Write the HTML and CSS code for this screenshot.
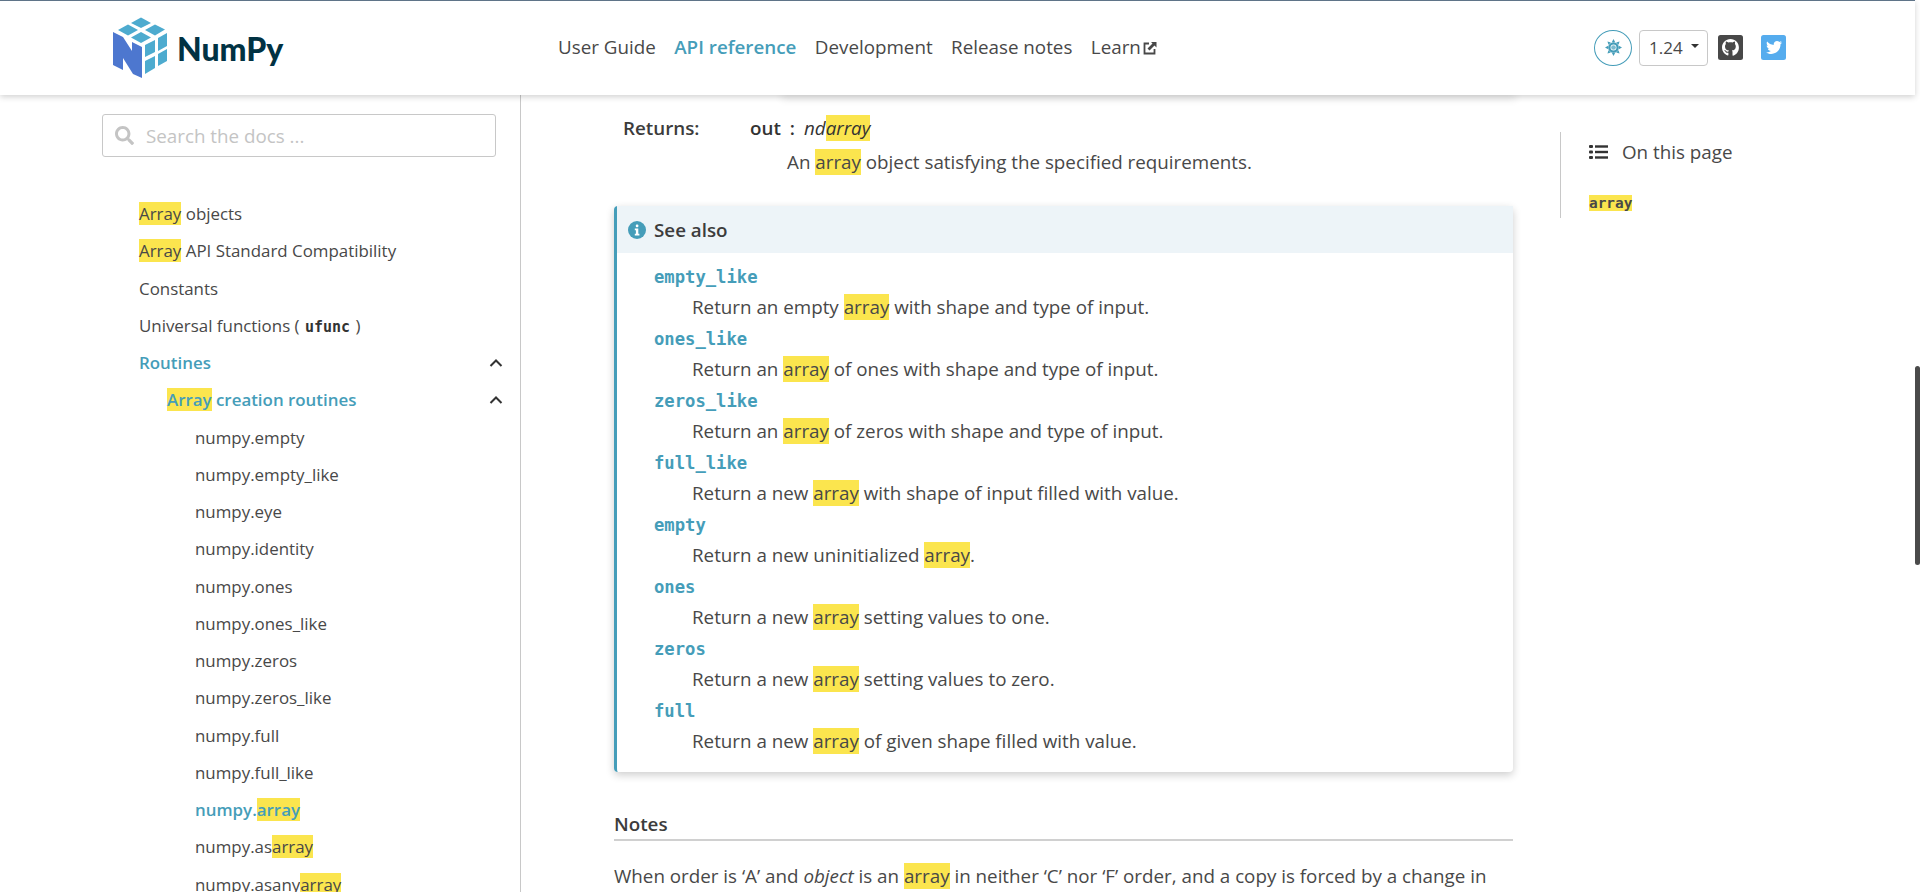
FILE: index.html
```html
<!DOCTYPE html>
<html lang="en">
<head>
    <meta charset="UTF-8">
    <title>numpy.array - NumPy v1.24 Manual</title>
    <link rel="stylesheet" href="styles.css">
</head>
<body>
    <!-- Navbar -->
    <header class="navbar">
        <a class="brand">
            <svg class="logo" viewBox="0 0 70 70">
                <g fill="#4dabcf">
                    <polygon points="33,4.500 43,10 33,15 23,10"/>
                    <polygon points="20,11.500 30,17 20,22.500 10,17"/>
                    <polygon points="47,11.500 57,16.500 47,22.500 37,17"/>
                    <polygon points="33,19 43,24.500 33,30 23,24.500"/>
                    <polygon points="37,32 47,27 47,39 37,44"/>
                    <polygon points="50,25 59,20 59,33 50,38"/>
                    <polygon points="37,48 47,43 47,55 37,61"/>
                    <polygon points="50,41 59,36 59,48 50,53"/>
                </g>
                <polygon fill="#4d77cf" points="5,19 15,24 24,38 24,29 34,34 34,65 25,61 15,45 15,57 5,52"/>
            </svg>
            <span class="brand-name">NumPy</span>
        </a>
        <nav class="main-nav">
            <a>User Guide</a>
            <a class="active">API reference</a>
            <a>Development</a>
            <a>Release notes</a>
            <a>Learn<svg class="ext-icon" viewBox="0 0 16 16"><path d="M7 3.500H2.500v10h10V9" fill="none" stroke="#484848" stroke-width="1.800"/><path d="M9 2h5.500v5.500l-2-2L7.500 10.500 5.500 8.500l5-5z" fill="#484848"/></svg></a>
        </nav>
        <div class="nav-tools">
            <button class="theme-btn">
                <svg viewBox="0 0 16 16" width="17" height="17"><g fill="#459db9"><path fill-rule="evenodd" d="M8 3a5 5 0 1 0 0 10A5 5 0 0 0 8 3zm0 2.200a2.800 2.800 0 1 1 0 5.600 2.800 2.800 0 0 1 0-5.600z"/><path d="M8 0l1.600 3H6.400zM8 16l-1.600-3h3.200zM0 8l3-1.600v3.200zM16 8l-3 1.600V6.400zM2.300 2.300l3.200 1-2.200 2.200zM13.700 13.700l-3.200-1 2.200-2.200zM13.700 2.300l-1 3.200-2.200-2.200zM2.300 13.700l1-3.200 2.200 2.200z"/><circle cx="8" cy="8" r="2.200" opacity="0.700"/></g></svg>
            </button>
            <button class="version-btn">1.24<span class="caret"></span></button>
            <a class="social">
                <svg viewBox="0 0 26 26" width="26" height="26"><rect width="25" height="25" rx="2.500" fill="#484848"/><path d="M12.500 4C7.800 4 4 7.800 4 12.500c0 3.700 2.400 6.900 5.800 8 .4.100.600-.2.600-.4v-2.400c-2.400.5-2.900-1-2.900-1-.4-1-1-1.300-1-1.300-.8-.5.100-.5.100-.5.900.1 1.300.9 1.300.9.800 1.300 2 .9 2.500.7.100-.6.300-.9.500-1.100-1.900-.2-3.900-1-3.900-4.200 0-.9.300-1.700.9-2.300-.1-.2-.4-1.100.1-2.300 0 0 .7-.2 2.300.9.700-.2 1.400-.3 2.100-.3s1.400.1 2.100.3c1.600-1.100 2.300-.9 2.300-.9.500 1.200.2 2.100.1 2.300.5.600.9 1.400.9 2.300 0 3.200-2 4-3.900 4.200.3.300.6.800.6 1.600v3.300c0 .2.200.5.600.4 3.400-1.100 5.800-4.300 5.800-8C21 7.800 17.200 4 12.500 4z" fill="#fff"/></svg>
            </a>
            <a class="social">
                <svg viewBox="0 0 26 26" width="26" height="26"><rect width="25" height="25" rx="2.500" fill="#55acee"/><path d="M21 7.400c-.6.300-1.200.4-1.900.5.700-.4 1.200-1 1.400-1.800-.6.400-1.300.7-2.100.8-.6-.6-1.500-1-2.400-1-1.800 0-3.300 1.500-3.300 3.300 0 .3 0 .5.100.7-2.700-.1-5.100-1.400-6.700-3.400-.3.500-.4 1-.4 1.700 0 1.100.6 2.200 1.500 2.700-.5 0-1-.2-1.500-.4 0 1.600 1.100 2.900 2.600 3.200-.5.200-1 .2-1.500.1.400 1.300 1.600 2.200 3.100 2.300-1.400 1-3 1.500-4.900 1.300 1.500.9 3.200 1.500 5.100 1.500 6.100 0 9.400-5 9.400-9.400v-.4c.6-.5 1.200-1.100 1.600-1.700z" fill="#fff"/></svg>
            </a>
        </div>
    </header>

    <!-- Main content -->
    <div class="layout">
        <aside class="sidebar">
            <div class="search-box">
                <svg viewBox="0 0 512 512" width="19" height="19"><path fill="#c4c4c4" d="M505 442.700L405.300 343c-4.500-4.500-10.600-7-17-7H372c27.600-35.300 44-79.700 44-128C416 93.100 322.900 0 208 0S0 93.100 0 208s93.100 208 208 208c48.300 0 92.700-16.400 128-44v16.300c0 6.400 2.500 12.500 7 17l99.700 99.700c9.400 9.400 24.600 9.400 33.900 0l28.300-28.300c9.400-9.400 9.400-24.600.1-34zM208 336c-70.700 0-128-57.200-128-128 0-70.700 57.200-128 128-128 70.700 0 128 57.200 128 128 0 70.700-57.200 128-128 128z"/></svg>
                <span class="search-text">Search the docs ...</span>
            </div>
            <ul class="side-nav">
                <li><a><mark>Array</mark> objects</a></li>
                <li><a><mark>Array</mark> API Standard Compatibility</a></li>
                <li><a>Constants</a></li>
                <li><a>Universal functions ( <code>ufunc</code> )</a></li>
                <li class="current"><a>Routines</a><svg class="chevron" viewBox="0 0 14 10"><path d="M1.500 8L7 2.500 12.500 8" fill="none" stroke="#333" stroke-width="2"/></svg></li>
                <li class="current lvl2"><a><mark>Array</mark> creation routines</a><svg class="chevron" viewBox="0 0 14 10"><path d="M1.500 8L7 2.500 12.500 8" fill="none" stroke="#333" stroke-width="2"/></svg></li>
                <li class="lvl3"><a>numpy.empty</a></li>
                <li class="lvl3"><a>numpy.empty_like</a></li>
                <li class="lvl3"><a>numpy.eye</a></li>
                <li class="lvl3"><a>numpy.identity</a></li>
                <li class="lvl3"><a>numpy.ones</a></li>
                <li class="lvl3"><a>numpy.ones_like</a></li>
                <li class="lvl3"><a>numpy.zeros</a></li>
                <li class="lvl3"><a>numpy.zeros_like</a></li>
                <li class="lvl3"><a>numpy.full</a></li>
                <li class="lvl3"><a>numpy.full_like</a></li>
                <li class="lvl3 current"><a>numpy.<mark>array</mark></a></li>
                <li class="lvl3"><a>numpy.as<mark>array</mark></a></li>
                <li class="lvl3"><a>numpy.asany<mark>array</mark></a></li>
            </ul>
        </aside>

        <main class="content">
            <div class="sig-edge"></div>
            <div class="returns">
                <span class="field-name">Returns:</span>
                <div class="field-body">
                    <div class="ret-type"><strong>out</strong><span class="colon">:</span><em>nd<mark>array</mark></em></div>
                    <p>An <mark>array</mark> object satisfying the specified requirements.</p>
                </div>
            </div>

            <section class="admonition">
                <div class="admonition-title">
                    <svg viewBox="0 0 18 18" width="18" height="18"><circle cx="9" cy="9" r="9" fill="#459db9"/><rect x="7.800" y="3.600" width="2.600" height="2.600" rx="1" fill="#fff"/><path d="M6.800 7.600h3.500v5.200h1.100v1.600H6.800v-1.600h1.100V9.200H6.800z" fill="#fff"/></svg>
                    See also
                </div>
                <dl class="see-list">
                    <dt>empty_like</dt>
                    <dd>Return an empty <mark>array</mark> with shape and type of input.</dd>
                    <dt>ones_like</dt>
                    <dd>Return an <mark>array</mark> of ones with shape and type of input.</dd>
                    <dt>zeros_like</dt>
                    <dd>Return an <mark>array</mark> of zeros with shape and type of input.</dd>
                    <dt>full_like</dt>
                    <dd>Return a new <mark>array</mark> with shape of input filled with value.</dd>
                    <dt>empty</dt>
                    <dd>Return a new uninitialized <mark>array</mark>.</dd>
                    <dt>ones</dt>
                    <dd>Return a new <mark>array</mark> setting values to one.</dd>
                    <dt>zeros</dt>
                    <dd>Return a new <mark>array</mark> setting values to zero.</dd>
                    <dt>full</dt>
                    <dd>Return a new <mark>array</mark> of given shape filled with value.</dd>
                </dl>
            </section>

            <h2 class="rubric">Notes</h2>
            <p class="notes-text">When order is ‘A’ and <em>object</em> is an <mark>array</mark> in neither ‘C’ nor ‘F’ order, and a copy is forced by a change in</p>
        </main>

        <aside class="toc">
            <div class="toc-inner">
                <div class="toc-title">
                    <svg viewBox="0 0 20 16" width="20" height="16"><g fill="#333"><rect x="0" y="1" width="4" height="3" rx="1"/><rect x="0" y="6.500" width="4" height="3" rx="1"/><rect x="0" y="12" width="4" height="3" rx="1"/><rect x="6" y="1.300" width="13" height="2.400"/><rect x="6" y="6.800" width="13" height="2.400"/><rect x="6" y="12.300" width="13" height="2.400"/></g></svg>
                    On this page
                </div>
                <a class="toc-link"><mark>array</mark></a>
            </div>
        </aside>
    </div>

    <div class="scroll-thumb"></div>
</body>
</html>
```

FILE: styles.css
```css
html, body {
    margin: 0;
    padding: 0;
    height: 892px;
    overflow: hidden;
}

body {
    font-family: "Open Sans", sans-serif;
    font-size: 18.800px;
    color: #484848;
    background-color: #fff;
}

mark {
    background-color: #fbe54e;
    color: inherit;
}

code, dt {
    font-family: "DejaVu Sans Mono", monospace;
}

/* Navbar */
.navbar {
    position: relative;
    z-index: 2;
    display: flex;
    align-items: center;
    box-sizing: border-box;
    width: 1915px;
    height: 95px;
    border-top: 1px solid #5f7488;
    background-color: #fff;
    box-shadow: 0 2px 6px rgba(0, 0, 0, 0.18);
}

.brand {
    display: flex;
    align-items: center;
    width: 558px;
    padding-left: 108px;
    box-sizing: border-box;
}

.logo {
    width: 70px;
    height: 70px;
}

.brand-name {
    font-family: Lato, sans-serif;
    font-weight: 900;
    font-size: 32px;
    color: #013243;
    margin-left: -1px;
}

.main-nav {
    display: flex;
    gap: 18.500px;
    width: 1036px;
    margin-top: -2px;
}

.main-nav a {
    display: flex;
    align-items: center;
    white-space: nowrap;
}

.main-nav .active {
    color: #459db9;
    font-weight: 600;
}

.ext-icon {
    width: 16px;
    height: 16px;
    margin-left: 1px;
    margin-top: 2px;
}

.nav-tools {
    display: flex;
    align-items: center;
    margin-top: -1px;
}

.theme-btn {
    display: flex;
    align-items: center;
    justify-content: center;
    width: 38px;
    height: 36px;
    margin-right: 7px;
    padding: 0;
    border: 1px solid #459db9;
    border-radius: 50%;
    background: none;
}

.version-btn {
    display: flex;
    align-items: center;
    width: 69px;
    height: 36px;
    padding: 0 0 0 9px;
    box-sizing: border-box;
    border: 1px solid #c8c8c8;
    border-radius: 4px;
    background: none;
    font-family: inherit;
    font-size: 17px;
    color: #484848;
}

.caret {
    margin-left: 8px;
    margin-bottom: 3px;
    border-top: 4.500px solid #333;
    border-left: 4.500px solid transparent;
    border-right: 4.500px solid transparent;
}

.social {
    display: flex;
    margin-left: 10px;
    width: 33px;
}

/* Three columns under the navbar */
.layout {
    display: flex;
    height: 797px;
    overflow: hidden;
}

.sidebar {
    box-sizing: border-box;
    width: 521px;
    flex-shrink: 0;
    padding: 19px 0 0 102px;
    border-right: 1px solid #c8c8c8;
}

.search-box {
    display: flex;
    align-items: center;
    box-sizing: border-box;
    width: 394px;
    height: 43px;
    padding-left: 12px;
    border: 1px solid #c8c8c8;
    border-radius: 3px;
}

.search-text {
    margin-left: 12px;
    color: #c4c4c4;
}

.side-nav {
    list-style: none;
    margin: 38px 0 0;
    padding: 0 0 0 37px;
    font-size: 16.900px;
}

.side-nav li {
    display: flex;
    align-items: center;
    justify-content: space-between;
    height: 37.250px;
    width: 366px;
}

.side-nav code {
    font-size: 15px;
    font-weight: 700;
    color: #333;
    margin: 0 1px;
}

.side-nav .current {
    color: #459db9;
    font-weight: 600;
}

.side-nav .lvl2 a {
    padding-left: 28px;
}

.side-nav .lvl3 a {
    padding-left: 56px;
}

.chevron {
    width: 14px;
    height: 10px;
    margin-right: 2px;
}

/* Article */
.content {
    box-sizing: border-box;
    width: 993px;
    flex-shrink: 0;
    padding-left: 93px;
    line-height: 34px;
}

.sig-edge {
    height: 0;
    margin-left: 170px;
    box-shadow: 0 1px 8px 2px rgba(0, 0, 0, 0.16);
}

.returns {
    display: flex;
    padding: 16px 0 0 9px;
    width: 890px;
}

.field-name {
    width: 127px;
    color: #3c3c3c;
    font-weight: 600;
}

.field-body p {
    margin: 0;
    padding-left: 37px;
    color: #484848;
}

.ret-type {
    color: #333;
}

.ret-type strong {
    font-weight: 600;
}

.colon {
    margin: 0 9px;
    font-weight: 600;
}

.admonition {
    width: 899px;
    box-sizing: border-box;
    margin-top: 27px;
    border-left: 3px solid #459db9;
    border-radius: 4px;
    box-shadow: 0 3px 8px rgba(0, 0, 0, 0.2);
}

.admonition-title {
    display: flex;
    align-items: center;
    gap: 8px;
    height: 47px;
    padding-left: 11px;
    background-color: #edf4f8;
    color: #3c3c3c;
    font-weight: 600;
}

.see-list {
    margin: 0;
    padding: 8px 0 15px 37px;
}

.see-list dt {
    height: 31px;
    line-height: 33px;
    font-size: 17.200px;
    font-weight: 700;
    color: #459db9;
}

.see-list dd {
    height: 31px;
    line-height: 31px;
    margin: 0 0 0 38px;
}

.rubric {
    width: 899px;
    height: 34px;
    box-sizing: border-box;
    margin: 35px 0 0;
    border-bottom: 2px solid #d0d0d0;
    font-size: 18.800px;
    font-weight: 600;
    line-height: 34px;
    color: #3c3c3c;
}

.notes-text {
    margin: 18px 0 0;
    white-space: nowrap;
}

/* Right hand table of contents */
.toc {
    padding: 37px 0 0 46px;
}

.toc-inner {
    box-sizing: border-box;
    height: 86px;
    padding: 7px 0 0 28px;
    border-left: 1px solid #c8c8c8;
}

.toc-title {
    display: flex;
    align-items: center;
    gap: 13px;
    white-space: nowrap;
}

.toc-link {
    display: block;
    margin-top: 29px;
    font-family: "DejaVu Sans Mono", monospace;
    font-size: 14.400px;
    font-weight: 700;
    line-height: 18px;
}

.scroll-thumb {
    position: absolute;
    top: 366px;
    left: 1915px;
    width: 5px;
    height: 199px;
    border-radius: 3px;
    background-color: #4a4a4a;
}
```
